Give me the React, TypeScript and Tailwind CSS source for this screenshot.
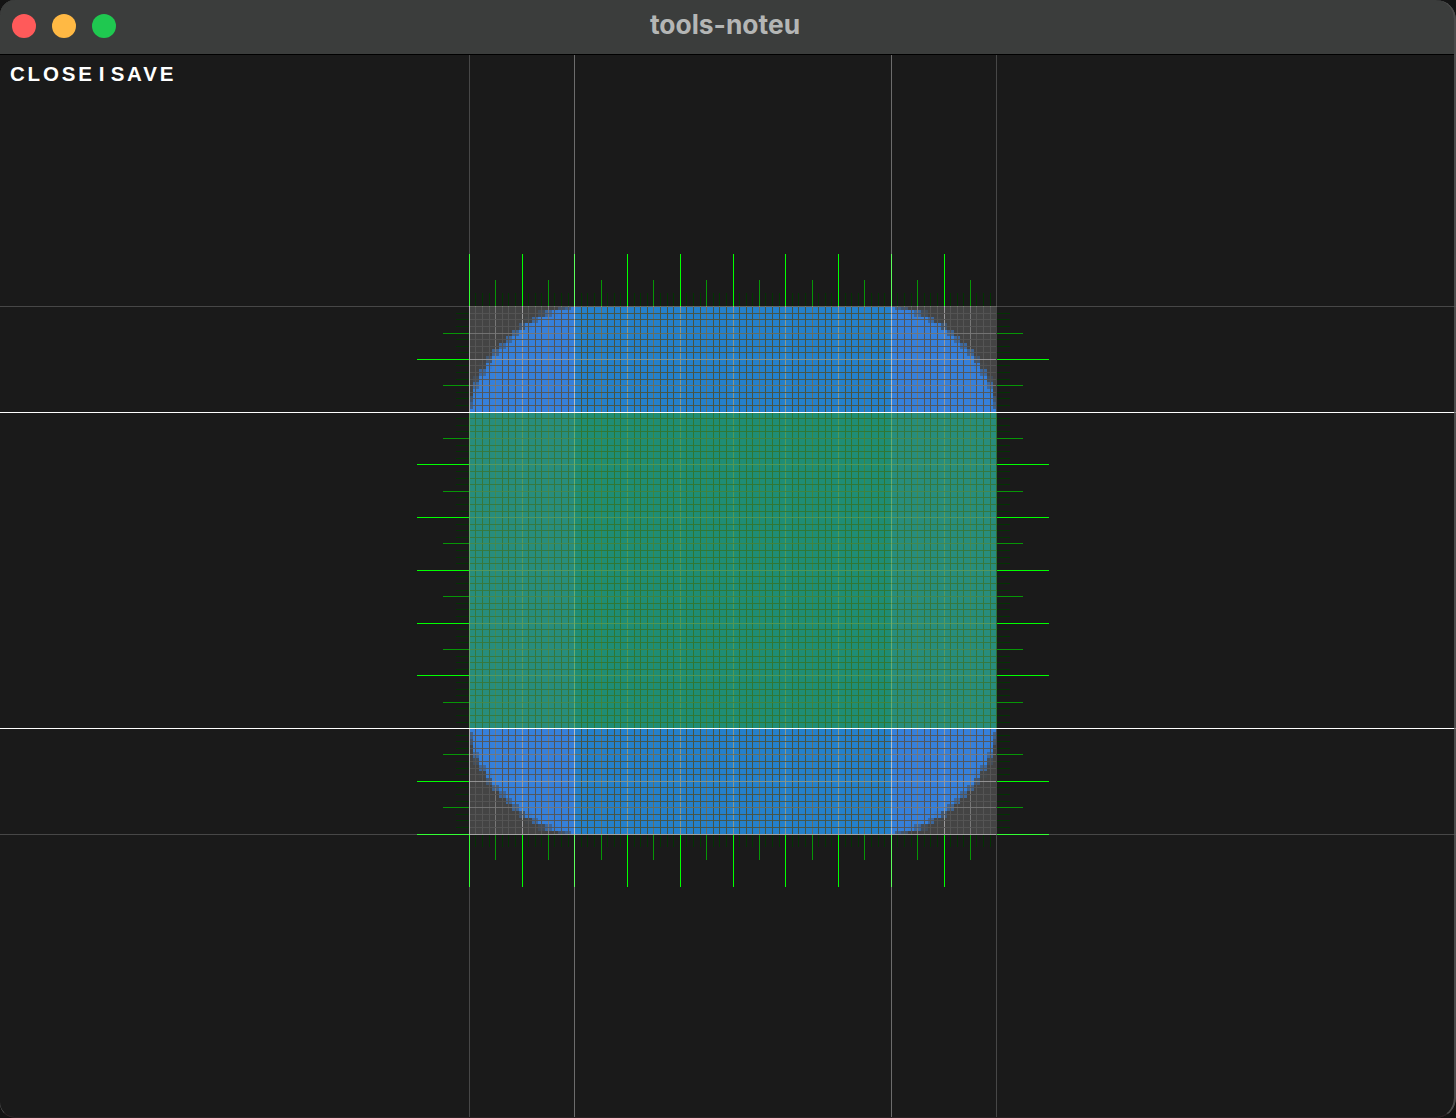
const CELLS = 80;
const STEP_X = 6.59375;
const STEP_Y = 6.5934;
const X0 = 469.26;
const Y0 = 306.63;
const TITLE = 55;

const gx = (i: number) => Math.floor(X0 + STEP_X * i);
const gy = (i: number) => Math.floor(Y0 + STEP_Y * i) - TITLE;
const idx = Array.from({ length: CELLS + 1 }, (_, i) => i);

const LEFT = gx(0);
const RIGHT = gx(CELLS);
const TOP = gy(0);
const BOTTOM = gy(CELLS);
const COL_A = gx(16);
const COL_B = gx(64);
const ROW_A = gy(16);
const ROW_B = gy(64);

const level = (i: number) => (i % 8 === 0 ? 2 : i % 4 === 0 ? 1 : 0);
const TICK_COLOR = ["#033303", "#069606", "#00ff00"];
const TICK_LEN = [13, 26, 52];
const GRID_COLOR = ["#555555", "#777777", "#999999"];
const GRID_COLOR_MID = ["#4a533f", "#6c6e58", "#8f9784"];

/* Corner texels are centred on grid intersections. */
const edge = (k: number, origin: number, lo: number, hi: number) =>
  Math.min(hi, Math.max(lo, Math.round(origin + STEP_X * (k - 0.5))));

const CURVE = 1.65;
const coverage = (dx: number, dy: number) => {
  if (dx === 0 || dy === 0) return 1;
  const d = Math.pow(Math.pow(dx, CURVE) + Math.pow(dy, CURVE), 1 / CURVE);
  return Math.max(0, Math.min(1, 16.6 - d));
};

const texels: { x: number; y: number; w: number; h: number; a: number }[] = [];
for (const r of idx) {
  const y = edge(r, Y0 - TITLE, TOP, BOTTOM);
  const h = edge(r + 1, Y0 - TITLE, TOP, BOTTOM) - y;
  const dy = Math.max(0, 16 - r, r - 64);
  let start = -1;
  for (const c of idx) {
    const a = coverage(Math.max(0, 16 - c, c - 64), dy);
    const x = edge(c, X0, LEFT, RIGHT);
    if (a === 1) {
      if (start < 0) start = x;
      continue;
    }
    if (start >= 0) {
      texels.push({ x: start, y, w: x - start, h, a: 1 });
      start = -1;
    }
    if (a > 0) texels.push({ x, y, w: edge(c + 1, X0, LEFT, RIGHT) - x, h, a });
  }
  if (start >= 0) texels.push({ x: start, y, w: RIGHT - start, h, a: 1 });
}

function Canvas() {
  return (
    <svg width={1456} height={1063} className="block" shapeRendering="crispEdges">
      <rect x={LEFT} y={TOP} width={RIGHT - LEFT} height={BOTTOM - TOP} fill="#444444" />
      {texels.map((t, i) => (
        <rect key={i} x={t.x} y={t.y} width={t.w} height={t.h} fill="#3680db" opacity={t.a} />
      ))}
      <rect x={COL_A} y={TOP} width={COL_B - COL_A} height={BOTTOM - TOP} fill="#2480cb" />
      <rect x={LEFT} y={TOP} width={RIGHT - LEFT} height={1} fill="#3c3c36" />
      {idx.slice(0, CELLS).map((i) => (
        <rect
          key={i}
          x={gx(i)}
          y={TOP}
          width={1}
          height={BOTTOM - TOP}
          fill={i > 16 && i < 64 ? GRID_COLOR_MID[level(i)] : GRID_COLOR[level(i)]}
        />
      ))}
      {/* Rows blend lightly with the columns they cross. */}
      {idx.slice(1).map((i) => (
        <g key={i} opacity={0.9}>
          <rect x={LEFT} y={gy(i)} width={COL_A - LEFT} height={1} fill={GRID_COLOR[level(i)]} />
          <rect
            x={COL_A}
            y={gy(i)}
            width={COL_B - COL_A}
            height={1}
            fill={i < CELLS ? GRID_COLOR_MID[level(i)] : GRID_COLOR[2]}
          />
          <rect x={COL_B} y={gy(i)} width={RIGHT - COL_B} height={1} fill={GRID_COLOR[level(i)]} />
        </g>
      ))}
      <rect x={LEFT} y={TOP} width={1} height={BOTTOM - TOP} fill={GRID_COLOR[2]} />
      {idx.map((i) => {
        const lv = level(i);
        const n = TICK_LEN[lv];
        return (
          <g key={i} fill={TICK_COLOR[lv]}>
            {i < CELLS && <rect x={gx(i)} y={TOP - n} width={1} height={n} />}
            {i < CELLS && <rect x={gx(i)} y={BOTTOM + 1} width={1} height={lv === 2 ? n : n - 1} />}
            {i > 0 && <rect x={LEFT - n} y={gy(i)} width={n} height={1} />}
            {i > 0 && <rect x={RIGHT + 1} y={gy(i)} width={n} height={1} />}
          </g>
        );
      })}
      <g fill="#ffffff">
        <rect x={LEFT} y={0} width={1} height={1063} opacity={0.2} />
        <rect x={RIGHT} y={0} width={1} height={1063} opacity={0.2} />
        <rect x={COL_A} y={0} width={1} height={1063} opacity={0.36} />
        <rect x={COL_B} y={0} width={1} height={1063} opacity={0.36} />
        <rect x={0} y={TOP} width={1456} height={1} opacity={0.2} />
        <rect x={0} y={BOTTOM} width={1456} height={1} opacity={0.2} />
      </g>
      <rect x={LEFT} y={ROW_A} width={RIGHT + 1 - LEFT} height={ROW_B - ROW_A} fill="#1a9a20" opacity={0.5} />
      <rect x={0} y={ROW_A} width={1456} height={1} fill="#ffffff" />
      <rect x={0} y={ROW_B} width={1456} height={1} fill="#ffffff" />
    </svg>
  );
}

export default function App() {
  return (
    <div className="h-[1118px] w-[1456px] overflow-hidden bg-[#141414]">
      <div className="relative flex h-full w-full flex-col overflow-hidden rounded-l-[15px] rounded-r-[20px] bg-[#1a1a1a]">
        <header className="relative flex h-[55px] shrink-0 items-center border-b border-black bg-[#3b3d3c] px-3">
          <div className="flex gap-4 pb-[2px]">
            <span className="size-6 rounded-full bg-[#ff5a5a]" />
            <span className="size-6 rounded-full bg-[#ffb944]" />
            <span className="size-6 rounded-full bg-[#1fc850]" />
          </div>
          <h1 className="absolute inset-x-0 top-[6px] pr-[6px] text-center font-['Inter'] text-[26.4px] leading-9 font-bold text-[#b4b6b5]">
            tools-noteu
          </h1>
        </header>
        <div className="pointer-events-none absolute -top-px right-0 bottom-0 -left-px rounded-l-[16px] rounded-r-[20px] border border-r-2 border-[#4c4c4c] border-b-[#2a2224]" />
        <main className="relative flex-1">
          <Canvas />
          <div className="absolute top-[7px] left-[10px] flex font-['Liberation_Sans'] text-[20.5px] leading-6 font-bold tracking-[2.8px] text-white">
            <span>CLOSE</span>
            <span className="mr-[3.5px] ml-[4px]">I</span>
            <span>SAVE</span>
          </div>
        </main>
        <div className="pointer-events-none absolute -top-px right-0 bottom-0 -left-px rounded-l-[16px] rounded-r-[20px] border border-r-2 border-[#4c4c4c]/70 border-b-[#2a2224]" />
      </div>
    </div>
  );
}
